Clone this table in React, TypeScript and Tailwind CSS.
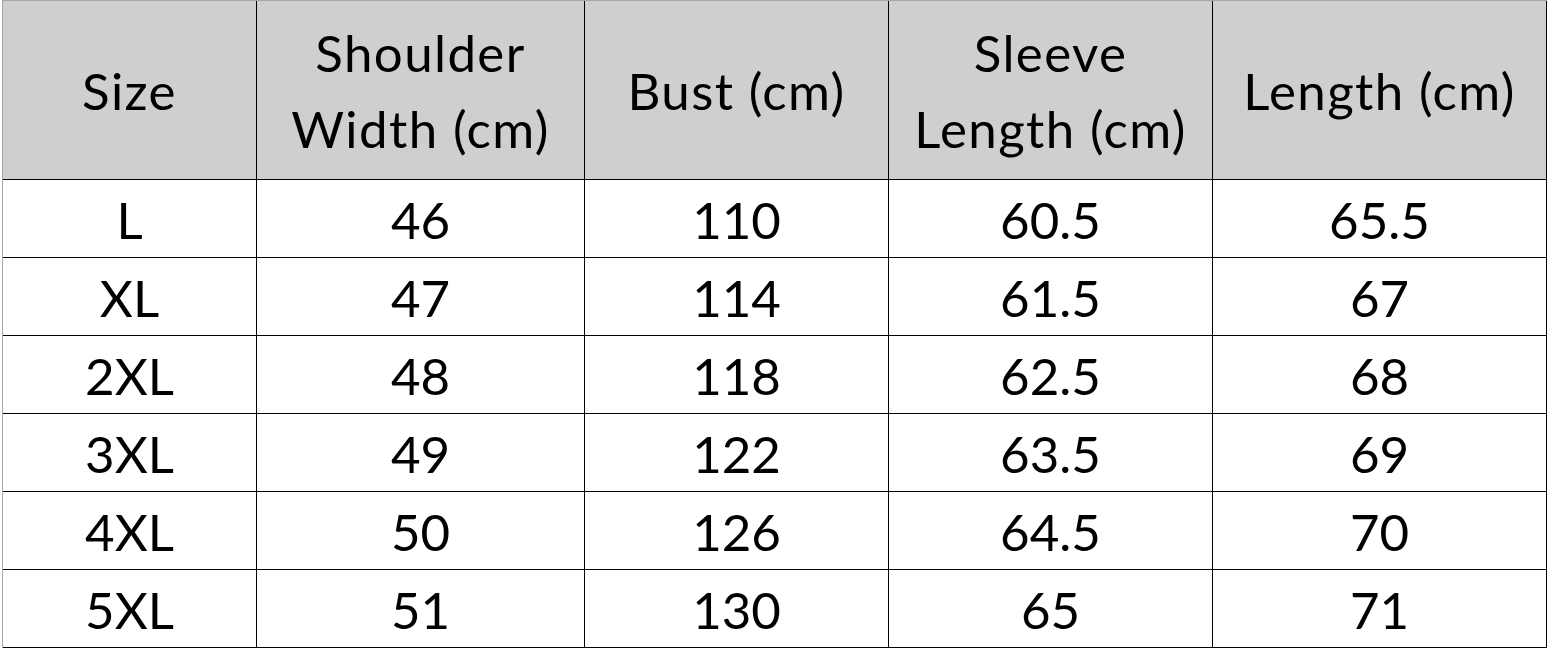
const headers = ['Size', 'Shoulder Width (cm)', 'Bust (cm)', 'Sleeve Length (cm)', 'Length (cm)'];

const headerLines: string[][] = [['Size'], ['Shoulder', 'Width (cm)'], ['Bust (cm)'], ['Sleeve', 'Length (cm)'], ['Length (cm)']];

const rows: string[][] = [
  ['L', '46', '110', '60.5', '65.5'],
  ['XL', '47', '114', '61.5', '67'],
  ['2XL', '48', '118', '62.5', '68'],
  ['3XL', '49', '122', '63.5', '69'],
  ['4XL', '50', '126', '64.5', '70'],
  ['5XL', '51', '130', '65', '71'],
];

const cols = 'grid grid-cols-[254px_328px_304px_324px_334px]';

export default function App() {
  return (
    <div className="h-[650px] w-[1549px] bg-white font-['Lato','Open_Sans',sans-serif] text-[51px] text-black">
      <div className="ml-[2px] w-[1545px] border-l border-t border-l-[#a6a6a6] border-t-[#a6a6a6]" title={headers.join(', ')}>
        <div className={cols}>
          {headerLines.map((lines, i) => (
            <div
              key={i}
              className="flex h-[179px] flex-col items-center justify-center border-b border-r border-black bg-[#d0cece] pt-[2px] leading-[76px] tracking-[1.4px]"
            >
              {lines.map((l) => (
                <span key={l}>{l}</span>
              ))}
            </div>
          ))}
        </div>
        {rows.map((r) => (
          <div key={r[0]} className={cols}>
            {r.map((c, j) => (
              <div key={j} className="flex h-[78px] items-center justify-center border-b border-r border-black pt-[4px]">
                {c}
              </div>
            ))}
          </div>
        ))}
      </div>
    </div>
  );
}
